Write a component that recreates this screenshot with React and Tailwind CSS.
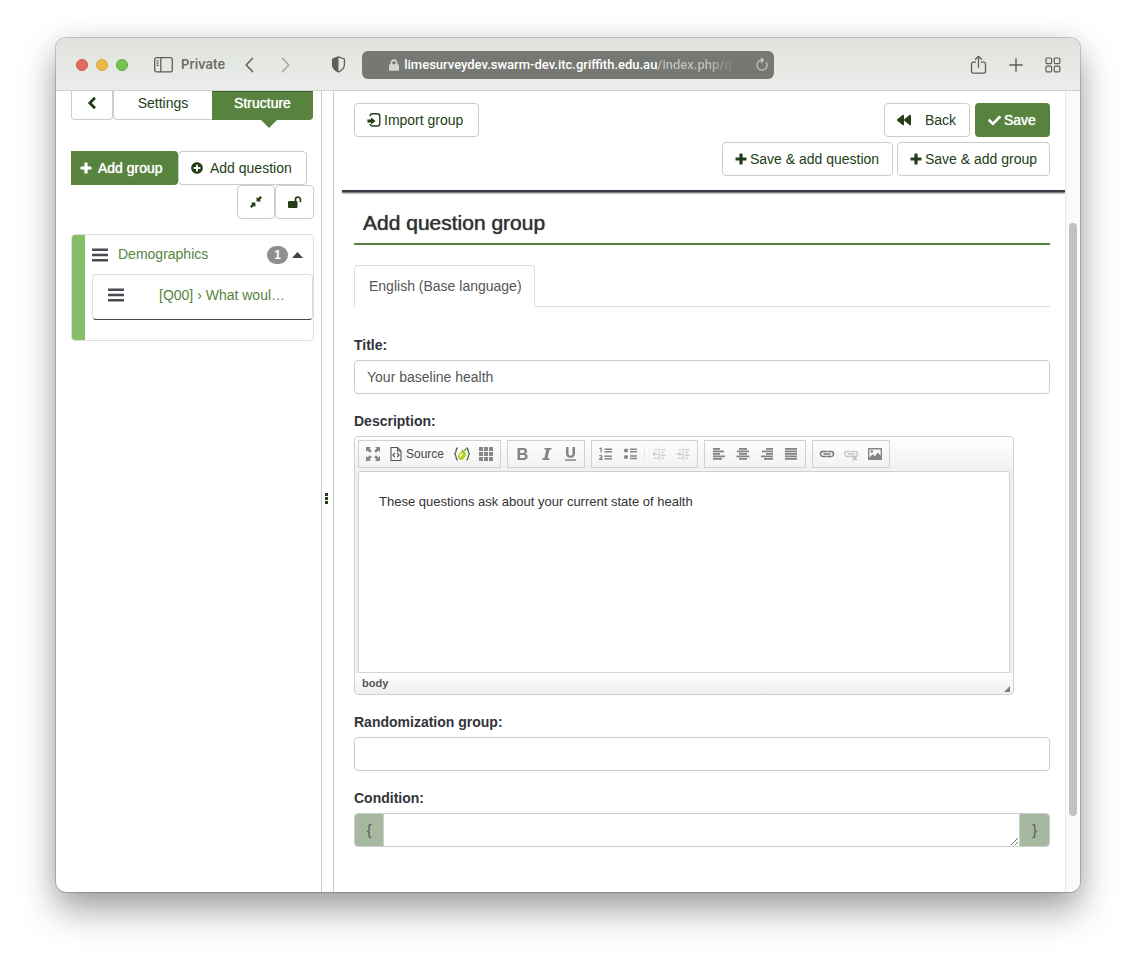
import React from "react";
import { FaCheck, FaBackward, FaPlusCircle, FaLock } from "react-icons/fa";

const btn =
  "flex h-[34px] items-center whitespace-nowrap rounded-[4px] border border-[#ccc] bg-white text-[14px] text-[#233e17]";
const primary =
  "flex h-[34px] items-center whitespace-nowrap bg-[#57833e] text-[14px] text-white [text-shadow:0_0_1px_#fff]";

function Plus() {
  return (
    <svg width="12" height="12" viewBox="0 0 12 12" fill="currentColor" className="shrink-0">
      <path d="M5 .5h2a.6.6 0 0 1 .6.6v3.300h3.300a.6.6 0 0 1 .6.6v2a.6.6 0 0 1-.6.6H7.600v3.300a.6.6 0 0 1-.6.6H5a.6.6 0 0 1-.6-.6V7.600H1.100a.6.6 0 0 1-.6-.6V5a.6.6 0 0 1 .6-.6h3.300V1.100A.6.6 0 0 1 5 .5z" />
    </svg>
  );
}

function TitleBar() {
  return (
    <header className="flex h-[53px] items-center border-b border-[#d0d1cf] bg-gradient-to-b from-[#dfe2dc] to-[#ecedeb] pt-px pr-[19px] pl-5 text-[#5c5f5a] [font-family:Inter,sans-serif]">
      <div className="flex shrink-0 items-center gap-2">
        <span className="size-3 rounded-full border border-[#cf5a4c] bg-[#e16b5c]" />
        <span className="size-3 rounded-full border border-[#d6a53a] bg-[#ecba46]" />
        <span className="size-3 rounded-full border border-[#60aa3d] bg-[#76c350]" />
      </div>
      <button aria-label="Sidebar" className="ml-[26px] shrink-0">
        <svg width="19" height="16" viewBox="0 0 19 16" fill="none" stroke="currentColor" strokeWidth="1.3">
          <rect x="0.7" y="0.7" width="17.6" height="14.2" rx="2" />
          <path d="M6.8 1v14M2.6 3.8h2M2.6 6.1h2M2.6 8.4h2" />
        </svg>
      </button>
      <span className="ml-2 shrink-0 text-[13px] font-semibold text-[#6b6e69]">Private</span>
      <button aria-label="Previous page" className="ml-5 shrink-0">
        <svg width="9" height="16" viewBox="0 0 9 16" fill="none" stroke="currentColor" strokeWidth="1.5" strokeLinecap="round" strokeLinejoin="round">
          <path d="M7.6 1.3 1.2 8l6.4 6.7" />
        </svg>
      </button>
      <button aria-label="Next page" className="ml-[27px] shrink-0 text-[#a4a7a2]">
        <svg width="9" height="16" viewBox="0 0 9 16" fill="none" stroke="currentColor" strokeWidth="1.5" strokeLinecap="round" strokeLinejoin="round">
          <path d="m1.4 1.3 6.4 6.7-6.4 6.7" />
        </svg>
      </button>
      <button aria-label="Privacy report" className="ml-[41px] shrink-0">
        <svg width="15" height="17" viewBox="0 0 15 17">
          <path d="M7.5.9 13.4 3v6c0 3.4-2.6 5.3-5.9 7C4.200 14.300 1.600 12.400 1.600 9V3z" fill="none" stroke="currentColor" strokeWidth="1.3" strokeLinejoin="round" />
          <path d="M7.500.9 1.600 3v6c0 3.400 2.600 5.300 5.900 7z" fill="currentColor" />
        </svg>
      </button>
      <div className="ml-4 flex h-7 max-w-[412px] min-w-0 flex-1 items-center rounded-[6px] bg-[#757873] pr-[5px] pl-[27px]">
        <FaLock className="mr-[5px] h-[12px] w-[10px] shrink-0 text-[#d5d6d4]" />
        <div className="min-w-0 flex-1 text-[13px] font-medium whitespace-nowrap text-white [font-family:Roboto,Inter,sans-serif]">
          limesurveydev.swarm-dev.itc.griffith.edu.au
          <span className="bg-gradient-to-r from-[#bfc1be] from-70% to-[#7c7f7a] bg-clip-text text-transparent">/index.php/q</span>
        </div>
        <button aria-label="Reload" className="ml-3 shrink-0 text-[#cfd0ce]">
          <svg width="14" height="15" viewBox="0 0 14 15" fill="none" stroke="currentColor" strokeWidth="1.1" strokeLinecap="round" strokeLinejoin="round">
            <path d="M11.300 5.500a5 5 0 1 1-4.300-2.400h1.200M6.200.8l2.300 2.300-2.300 2.300" />
          </svg>
        </button>
      </div>
      <div className="ml-auto flex shrink-0 items-center gap-[22px]">
        <button aria-label="Share">
          <svg width="17" height="20" viewBox="0 0 17 20" fill="none" stroke="currentColor" strokeWidth="1.3" strokeLinecap="round" strokeLinejoin="round">
            <path d="M5.500 7.200H3.200c-1 0-1.700.6-1.700 1.600v7.700c0 1 .7 1.600 1.700 1.600h10.600c1 0 1.700-.6 1.700-1.600V8.800c0-1-.7-1.600-1.700-1.600h-2.300M8.500 12.300V1.400M5.500 4.200l3-3 3 3" />
          </svg>
        </button>
        <button aria-label="New tab">
          <svg width="14" height="14" viewBox="0 0 14 14" fill="none" stroke="currentColor" strokeWidth="1.400" strokeLinecap="round">
            <path d="M7 .8v12.400M.8 7h12.400" />
          </svg>
        </button>
        <button aria-label="Tab overview">
          <svg width="16" height="16" viewBox="0 0 16 16" fill="none" stroke="currentColor" strokeWidth="1.200">
            <rect x="1" y="1" width="5.600" height="5.600" rx="1" />
            <rect x="9.200" y="1" width="5.600" height="5.600" rx="1" />
            <rect x="1" y="9.200" width="5.600" height="5.600" rx="1" />
            <rect x="9.200" y="9.200" width="5.600" height="5.600" rx="1" />
          </svg>
        </button>
      </div>
    </header>
  );
}

function Bars() {
  return (
    <svg width="16" height="14" viewBox="0 0 16 14" fill="#4a4a55" className="shrink-0">
      <rect y="0.500" width="16" height="2.600" rx=".5" />
      <rect y="5.700" width="16" height="2.600" rx=".5" />
      <rect y="10.900" width="16" height="2.600" rx=".5" />
    </svg>
  );
}

function Sidebar() {
  return (
    <aside className="w-[265px] shrink-0 pr-[7px] pl-[15px]">
      <nav className="flex">
        <button aria-label="Collapse" className="flex h-[29px] w-[42px] items-center justify-center rounded-b-[4px] border border-t-0 border-[#ccc] pb-1 text-[#233e17]">
          <svg width="10" height="14" viewBox="0 0 10 14" fill="none" stroke="currentColor" strokeWidth="2.800">
            <path d="M8 1.800 2.800 7 8 12.200" />
          </svg>
        </button>
        <button className="h-[29px] w-[99px] rounded-bl-[4px] border border-t-0 border-r-0 border-[#ccc] pb-1 text-[14px] text-[#233e17]">
          Settings
        </button>
        <button className="relative h-[29px] w-[101px] rounded-br-[4px] border-t border-[#3d6128] bg-[#57833e] pb-[6px] text-[14px] text-white [text-shadow:0_0_1px_#fff]">
          Structure
          <svg className="absolute top-full left-[49px]" width="16" height="8" viewBox="0 0 16 8" fill="#57833e">
            <path d="M0 0h16L8 8z" />
          </svg>
        </button>
      </nav>

      <div className="mt-[31px] flex">
        <button className={`${primary} w-[107px] gap-[6px] rounded-r-[4px] pl-[9px]`}>
          <Plus />
          Add group
        </button>
        <button className={`${btn} w-[129px] gap-[7px] pl-3`}>
          <FaPlusCircle className="size-3" />
          Add question
        </button>
      </div>
      <div className="flex justify-end">
        <button aria-label="Collapse all" className={`${btn} w-[38px] justify-center`}>
          <svg width="12" height="12" viewBox="0 0 12 12" fill="currentColor">
            <path d="M6.600.9v4.500h4.500L9.700 4 12 1.700 10.300 0 8 2.300zM5.400 11.100V6.600H.9L2.300 8 0 10.300 1.700 12 4 9.700z" />
          </svg>
        </button>
        <button aria-label="Unlock" className={`${btn} w-[39px] justify-center`}>
          <svg width="14" height="12" viewBox="0 0 14 12">
            <rect x="0" y="5" width="9.500" height="7" rx="1" fill="currentColor" />
            <path d="M7.500 5.500V3.500a2.400 2.400 0 0 1 4.900 0v2" fill="none" stroke="currentColor" strokeWidth="1.700" strokeLinecap="round" />
          </svg>
        </button>
      </div>

      <div className="mt-[15px] flex h-[107px] overflow-hidden rounded-[4px] border border-[#ddd]">
        <div className="w-[13px] shrink-0 bg-[#87bf69]" />
        <div className="min-w-0 flex-1 pl-[7px]">
          <div className="flex h-[39px] items-center">
            <Bars />
            <a href="#demographics" className="ml-[10px] text-[14px] text-[#57833e]">Demographics</a>
            <span className="ml-auto flex h-[18px] w-[21px] items-center justify-center rounded-full bg-[#8f8f8f] text-[12px] font-bold text-white">1</span>
            <svg className="mr-[10px] ml-1" width="11" height="6" viewBox="0 0 11 6" fill="#41414d">
              <path d="M5.500 0 11 6H0z" />
            </svg>
          </div>
          <div className="flex h-[46px] items-center rounded-[4px] border border-[#ddd] border-b-[#45454f] pb-1 pl-[15px]">
            <Bars />
            <a href="#q00" className="ml-[35px] text-[14px] whitespace-nowrap text-[#57833e]">[Q00] › What woul…</a>
          </div>
        </div>
      </div>
    </aside>
  );
}

function Tool({ label, faded, children }) {
  return (
    <button type="button" aria-label={label} className={`flex h-6 w-6 items-center justify-center ${faded ? "opacity-35" : ""}`}>
      <svg width="16" height="16" viewBox="0 0 16 16" fill="#858585">
        {children}
      </svg>
    </button>
  );
}

function Group({ children }) {
  return <div className="flex h-7 items-center border border-[#d1d1d1] px-[2px]">{children}</div>;
}

function Lines({ rows }) {
  return rows.map(([x, w], i) => <rect key={i} x={x} y={2 + i * 2.5} width={w} height="1.800" />);
}

function LinkShape({ stroke = "#777" }) {
  return (
    <g fill="none" stroke={stroke} strokeWidth="1.500">
      <path d="M8.500 5.500H4a2.500 2.500 0 0 0 0 5h3M7.500 10.500H12a2.500 2.500 0 0 0 0-5H9" />
      <path d="M4.500 8h7" strokeWidth="1.700" />
    </g>
  );
}

function Editor() {
  return (
    <div className="max-w-[660px] rounded-[4px] border border-[#d1d1d1] bg-[#eee]">
      <div className="flex h-[34px] items-center gap-[6px] overflow-hidden rounded-t-[4px] bg-gradient-to-b from-white to-[#f1f1f1] pl-[3px]">
        <Group>
          <Tool label="Maximize">
            <path d="M1 1h5L4.400 2.600l2.400 2.400L5 6.800 2.600 4.400 1 6zM15 1v5l-1.600-1.600L11 6.800 9.200 5l2.400-2.400L10 1zM1 15v-5l1.600 1.600L5 9.200 6.800 11l-2.400 2.400L6 15zM15 15h-5l1.600-1.600L9.200 11 11 9.200l2.400 2.400L15 10z" />
          </Tool>
          <button type="button" className="flex h-6 w-[65px] items-center gap-[3px] pl-1 text-[12px] text-[#484848]">
            <svg width="14" height="16" viewBox="0 0 14 16" fill="none" stroke="#555" strokeWidth="1.100">
              <path d="M2 1.500h6.500l3.500 3.500v9.500H2zM8.500 1.500V5H12" />
              <path d="M5.800 6.800 4 9l1.800 2.200M8.200 6.800 10 9l-1.800 2.200" strokeWidth="1.300" />
            </svg>
            Source
          </button>
          <Tool label="LimeSurvey placeholders">
            <g fill="none" stroke="#555" strokeWidth="1.300">
              <path d="M3.800 2C1.200 2 3 7 .6 8c2.400 1 .6 6 3.200 6M12.400 2c2.600 0 .8 5 3.200 6-2.400 1-.6 6-3.200 6" />
            </g>
            <ellipse cx="8" cy="9.500" rx="3.500" ry="4.600" transform="rotate(30 8 9.500)" fill="#a9d52a" />
            <ellipse cx="7" cy="9" rx="1.500" ry="2.400" transform="rotate(30 7 9)" fill="#e4f68f" />
            <path d="M9.800 5.400C9.700 3.600 10.900 2.400 12.700 2c.1 1.900-1 3.300-2.900 3.400z" fill="#6fb32a" />
            <path d="M9.500 6 8 3.500" stroke="#557a20" strokeWidth=".9" />
          </Tool>
          <Tool label="Templates">
            {[1, 6, 11].map((y) => [1, 6, 11].map((x) => <rect key={`${x}-${y}`} x={x} y={y} width="4" height="4" />))}
          </Tool>
        </Group>
        <Group>
          <Tool label="Bold">
            <path fillRule="evenodd" d="M3.500 2h6c2.300 0 3.600 1.200 3.600 3.100 0 1.300-.7 2.200-1.800 2.600 1.500.3 2.400 1.400 2.400 2.900C13.700 12.800 12.200 14 9.700 14H3.500zM6.100 4v2.900h2.700c1.100 0 1.700-.5 1.700-1.500S9.900 4 8.800 4zM6.100 8.900V12h3c1.200 0 1.900-.5 1.900-1.600s-.7-1.500-1.900-1.500z" />
          </Tool>
          <Tool label="Italic">
            <path d="M6.500 2h7v1.700h-2L9.500 12.300h1.900V14H4.300v-1.700h2L8.300 3.700H6.500z" />
          </Tool>
          <Tool label="Underline">
            <path d="M4 1h2.500v6.300c0 1.600.6 2.400 2 2.400s2-.8 2-2.400V1H13v6.500c0 2.800-1.700 4.300-4.500 4.300S4 10.300 4 7.500zM3 13.300h11v1.500H3z" />
          </Tool>
        </Group>
        <Group>
          <Tool label="Numbered list">
            <path d="M2.500 1.500h1.300v5H2.500V3H1.300v-.9zM1.200 9.300c2.500-1.200 4.300.6 3.100 2L3 12.800h1.800V14H.9v-1l2-2.300c.4-.7-.5-1-1.700-.3zM6.500 2.500H14V4H6.500zM6.500 5H14v1.500H6.500zM6.500 9.500H14V11H6.500zM6.500 12H14v1.500H6.500z" />
          </Tool>
          <Tool label="Bulleted list">
            <circle cx="4" cy="4.500" r="2.100" />
            <circle cx="4" cy="11" r="2.100" />
            <path d="M8 2.500h7V4H8zM8 5h7v1.500H8zM8 9.200h7v1.500H8zM8 11.700h7v1.500H8z" />
          </Tool>
          <div className="mx-[2px] h-4 w-px bg-[#e9e9e9]" />
          <Tool label="Decrease indent" faded>
            <path d="M7.500 1.500h1.200v13H7.500zM10 3h4.500v1.300H10zM10 5.800h3v1.300h-3zM10 8.600h4.500v1.300H10zM10 11.400h3v1.300h-3zM1 8l3-2.500v1.800h3v1.400H4v1.800zM3 3h3.500v1.300H3zM3 11.700h3.500V13H3z" />
          </Tool>
          <Tool label="Increase indent" faded>
            <path d="M7.500 1.500h1.200v13H7.500zM10 3h4.500v1.300H10zM10 5.800h3v1.300h-3zM10 8.600h4.500v1.300H10zM10 11.400h3v1.300h-3zM7 8 4 5.500v1.800H1v1.400h3v1.800zM3 3h3.500v1.300H3zM3 11.700h3.500V13H3z" />
          </Tool>
        </Group>
        <Group>
          <Tool label="Align left"><Lines rows={[[2, 7], [2, 11], [2, 7], [2, 12], [2, 9]]} /></Tool>
          <Tool label="Center"><Lines rows={[[4, 8], [2, 12], [4, 8], [1.5, 13], [4, 8]]} /></Tool>
          <Tool label="Align right"><Lines rows={[[7, 7], [3, 11], [7, 7], [2, 12], [5, 9]]} /></Tool>
          <Tool label="Justify"><Lines rows={[[2, 12], [2, 12], [2, 12], [2, 12], [2, 12]]} /></Tool>
        </Group>
        <Group>
          <Tool label="Link"><LinkShape /></Tool>
          <Tool label="Unlink" faded>
            <LinkShape />
            <path d="m9.500 10 4.500 4.500M14 10l-4.500 4.500" stroke="#666" strokeWidth="1.600" />
          </Tool>
          <Tool label="Image">
            <path fillRule="evenodd" d="M1 2h14v12H1zM2.400 3.400v8.200l3.300-3.400 2.100 2 3-3.700 2.800 3.300V3.400z" />
            <circle cx="4.900" cy="5.500" r="1.300" />
          </Tool>
        </Group>
      </div>
      <div className="px-[3px]">
        <textarea
          id="description"
          defaultValue="These questions ask about your current state of health"
          className="block h-[202px] w-full resize-none rounded-t-[3px] border border-[#d1d1d1] bg-white px-5 py-5 text-[13px] leading-[20px] text-[#333] outline-none"
        />
      </div>
      <div className="flex h-[21px] items-end justify-between rounded-b-[4px] bg-gradient-to-b from-white to-[#efefef] pr-[3px] pb-[2px] pl-[7px]">
        <span className="pb-[1px] text-[11px] leading-4 font-bold text-[#555]">body</span>
        <svg width="6" height="6" viewBox="0 0 6 6" fill="#7d7d7d"><path d="M6 0v6H0z" /></svg>
      </div>
    </div>
  );
}

const label = "mb-[5px] block text-[14px] leading-5 font-bold text-[#33333b]";
const field = "block h-[34px] w-full rounded-[4px] border border-[#ccc] bg-white px-3 text-[14px] text-[#555] outline-none";

function Main() {
  return (
    <main className="min-w-0 flex-1">
      <div className="flex items-start justify-between pt-3 pr-[15px] pb-[14px] pl-5">
        <button className={`${btn} min-w-[125px] gap-[3px] px-3`}>
          <svg width="14" height="14" viewBox="0 0 14 14">
            <path d="M3 3.200C3.200 1.600 4 .8 5.300.8h4.900c1.700 0 2.600.9 2.600 2.600v7c0 1.700-.9 2.600-2.600 2.600H5.300C4 13 3.200 12.300 3 11" fill="none" stroke="currentColor" strokeWidth="1.400" />
            <path d="M.4 6.600H4V4.400L8.600 8 4 11.600V9.400H.4z" fill="currentColor" />
          </svg>
          Import group
        </button>
        <div className="flex flex-col items-end gap-[5px]">
          <div className="flex gap-[5px]">
            <button className={`${btn} min-w-[86px] gap-[14px] px-3`}>
              <FaBackward className="size-[14px]" />
              Back
            </button>
            <button className={`${primary} min-w-[75px] gap-[3px] rounded-[4px] px-[13px]`}>
              <FaCheck className="size-[13px]" />
              Save
            </button>
          </div>
          <div className="flex gap-1">
            <button className={`${btn} min-w-[171px] gap-[3px] px-3`}>
              <Plus />
              Save &amp; add question
            </button>
            <button className={`${btn} gap-[3px] px-3`}>
              <Plus />
              Save &amp; add group
            </button>
          </div>
        </div>
      </div>
      <div className="ml-2 h-[2px] bg-[#3c3d48] shadow-[0_1px_2px_#3c3d48]" />

      <form className="pr-[15px] pb-[45px] pl-5">
        <h1 className="mt-[19px] border-b-2 border-[#57833e] pb-2 pl-[9px] text-[21px] leading-6 text-[#333] [text-shadow:0_0_1px_#333]">
          Add question group
        </h1>
        <div className="mt-5 flex border-b border-[#ddd]">
          <button type="button" className="-mb-px h-[42px] rounded-t-[4px] border border-[#ddd] border-b-white bg-white pr-3 pl-[14px] text-[14px] text-[#555]">
            English (Base language)
          </button>
        </div>

        <div className="mt-7">
          <label htmlFor="title" className={label}>Title:</label>
          <input id="title" defaultValue="Your baseline health" className={field} />
        </div>
        <div className="mt-[17px]">
          <label htmlFor="description" className={label}>Description:</label>
          <Editor />
        </div>
        <div className="mt-[17px]">
          <label htmlFor="random" className={label}>Randomization group:</label>
          <input id="random" className={field} />
        </div>
        <div className="mt-[17px]">
          <label htmlFor="condition" className={label}>Condition:</label>
          <div className="flex h-[34px] overflow-hidden rounded-[4px] border border-[#ccc] text-[14px] text-[#555]">
            <span className="flex w-[29px] items-center justify-center border-r border-[#ccc] bg-[#a6b8a0]">{"{"}</span>
            <textarea id="condition" rows={1} className="block h-8 min-w-0 flex-1 resize-y bg-white px-3 py-1 outline-none" />
            <span className="flex w-[30px] items-center justify-center border-l border-[#ccc] bg-[#a6b8a0]">{"}"}</span>
          </div>
        </div>
      </form>
    </main>
  );
}

export default function App() {
  return (
    <div className="flex min-h-screen flex-col bg-white px-14 pt-[38px] pb-[74px] [font-family:'Liberation_Sans',Arial,sans-serif]">
      <div className="flex flex-1 flex-col overflow-hidden rounded-[10px] bg-white shadow-[0_0_0_1px_rgba(0,0,0,0.18),0_18px_36px_rgba(0,0,0,0.36),0_0_24px_rgba(0,0,0,0.08)]">
        <TitleBar />
        <div className="flex flex-1">
          <Sidebar />
          <div className="flex w-[13px] shrink-0 flex-col items-center justify-center gap-px border-x border-[#ccc] pt-[14px] pr-[2px]">
            <span className="size-[3px] bg-[#233e17]" />
            <span className="size-[3px] bg-[#233e17]" />
            <span className="size-[3px] bg-[#233e17]" />
          </div>
          <Main />
          <div className="flex w-[15px] shrink-0 flex-col items-center border-l border-[#e6e6e6] bg-[#fafafa]">
            <div className="grow-[132] basis-0" />
            <div className="w-2 grow-[593] basis-0 rounded-full bg-[#c1c1c1]" />
            <div className="grow-[76] basis-0" />
          </div>
        </div>
      </div>
    </div>
  );
}
